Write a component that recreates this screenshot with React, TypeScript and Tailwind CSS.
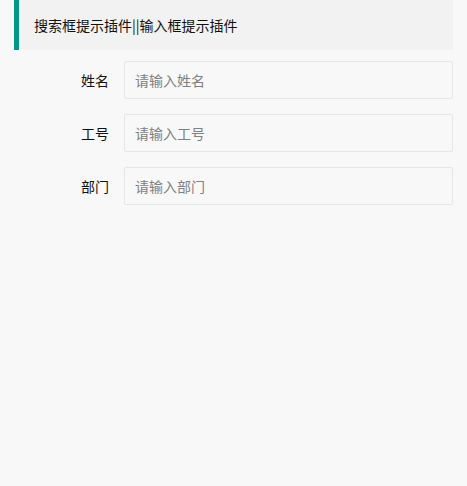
import React from "react";

const fields = [
  { label: "姓名", ph: "请输入姓名" },
  { label: "工号", ph: "请输入工号" },
  { label: "部门", ph: "请输入部门" },
];

export default function App() {
  return (
    <div
      className="min-h-[486px] w-[467px] bg-[#f8f8f8] pl-[14px] pr-[14px]"
      style={{ fontFamily: '"Noto Sans CJK SC", "Liberation Sans", sans-serif' }}
    >
      <div className="flex h-[50px] items-center border-l-[5px] border-[#009688] bg-[#f2f2f2] pl-[15px] text-[14px] text-[#111]">
        搜索框提示插件||输入框提示插件
      </div>
      <div className="mt-[11px] flex flex-col gap-[15px]">
        {fields.map((f) => (
          <div key={f.label} className="flex h-[38px] items-center">
            <div className="w-[110px] pr-[15px] text-right text-[14px] text-[#111]">{f.label}</div>
            <input
              className="h-[38px] flex-1 rounded-[2px] border border-[#e6e6e6] bg-[#f8f8f8] pl-[10px] text-[14px] text-[#333] outline-none placeholder:text-[#808080]"
              placeholder={f.ph}
            />
          </div>
        ))}
      </div>
    </div>
  );
}
